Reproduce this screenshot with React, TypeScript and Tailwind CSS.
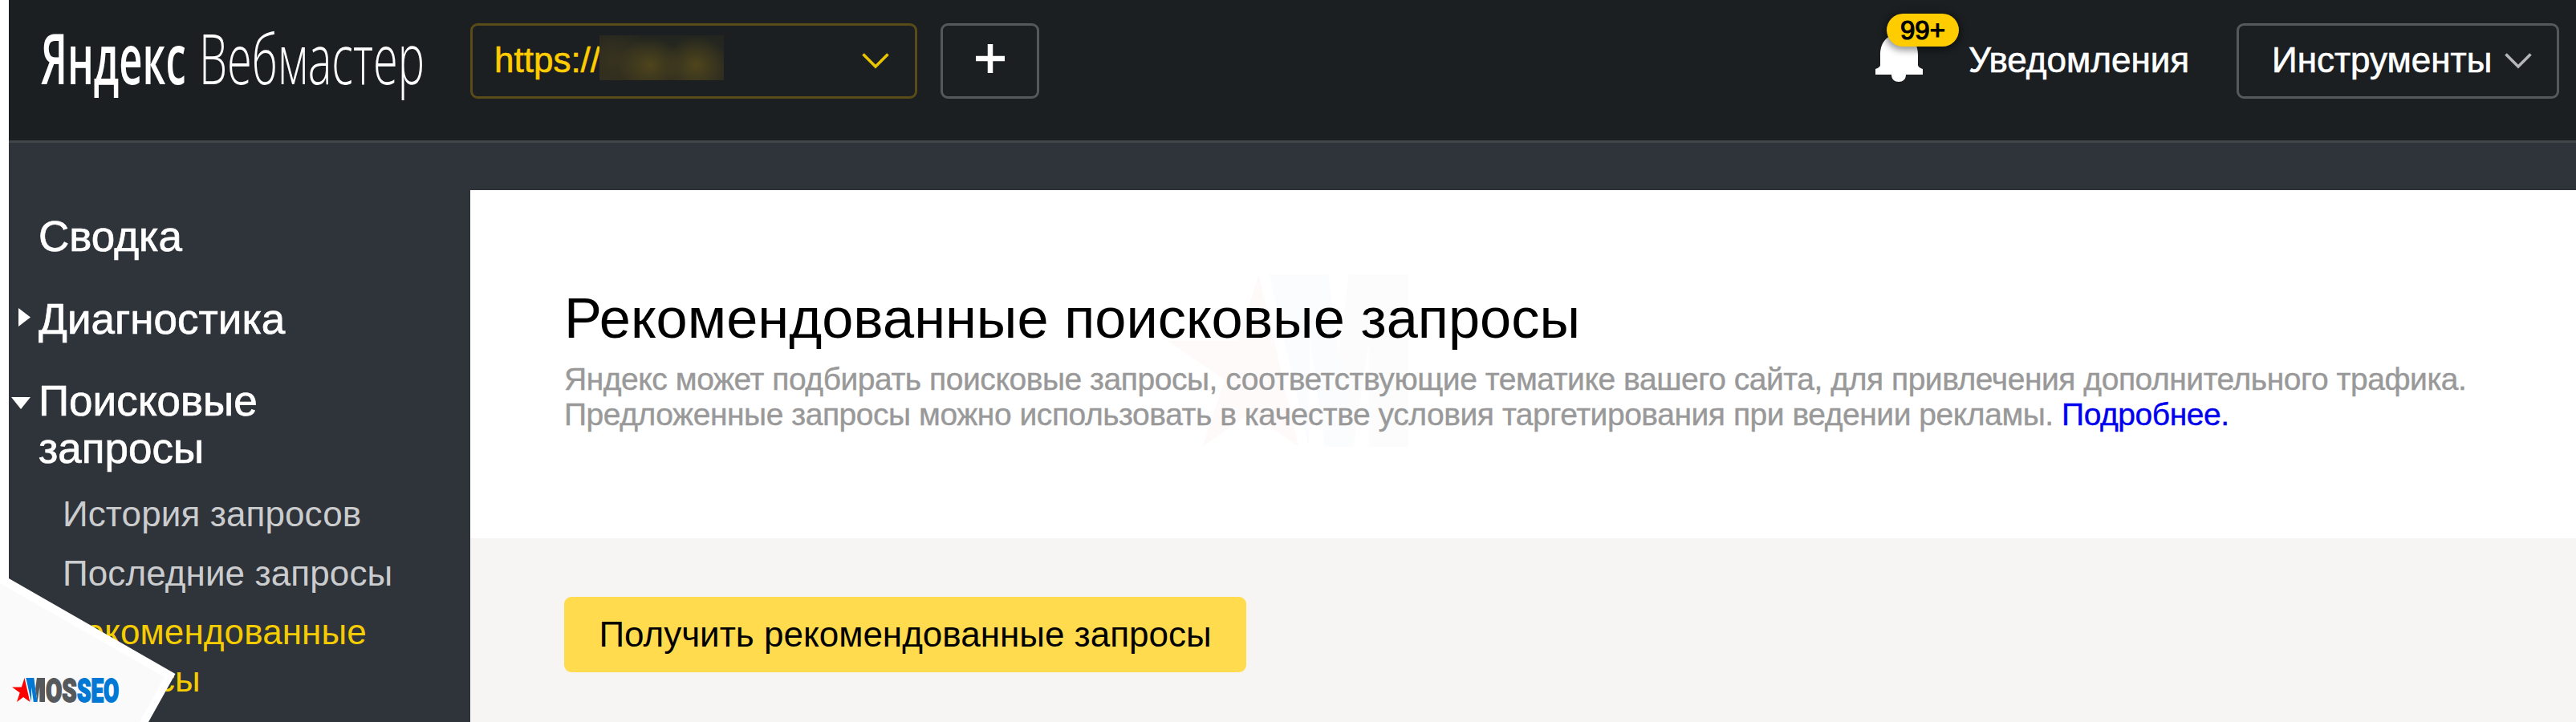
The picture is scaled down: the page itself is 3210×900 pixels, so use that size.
import type { ReactNode } from "react";

interface MarkProps {
  className?: string;
  star: string;
  left: string;
  right: string;
}

function Mark({ className, star, left, right }: MarkProps) {
  return (
    <svg className={className} viewBox="105 126 900 646" preserveAspectRatio="none">
      <path fill={star} d="M446 126 L595 772 L415 645 L235 772 L318 522 L105 375 L366 375 Z" />
      <path fill={left} d="M485 126 L705 126 L745 420 L800 772 L693 772 L637 375 L632 772 Z" />
      <path fill={right} d="M783 126 L1005 126 L1005 772 L858 772 L858 375 L800 772 L745 420 Z" />
    </svg>
  );
}

function Chevron({ className }: { className?: string }) {
  return (
    <svg className={className} width="34" height="20" viewBox="0 0 34 20" fill="none" stroke="currentColor" strokeWidth="3.6">
      <path d="M1.5 1.5 L17 17 L32.5 1.5" />
    </svg>
  );
}

function Logo() {
  return (
    <svg
      className="shrink-0 overflow-visible"
      width="575"
      height="175"
      fill="#fff"
      fontFamily="'Open Sans', sans-serif"
      fontSize="86"
    >
      <text transform="translate(40 105) scale(0.6 1)" textLength="301" lengthAdjust="spacingAndGlyphs" fontWeight="600">
        Яндекс
      </text>
      <text transform="translate(237 105) scale(0.64 1)" textLength="439" lengthAdjust="spacingAndGlyphs" fontWeight="300">
        Вебмастер
      </text>
    </svg>
  );
}

function Bell() {
  return (
    <div className="relative mt-[41px] h-[62px] w-[59px]">
      <svg width="59" height="62" viewBox="0 0 59 62" fill="#fff">
        <path d="M29 2 C13 2 6 13 6 28 V40 Q6 43 0 45 V52 H20 C20 58 24 61 29 61 S38 58 38 52 H59 V45 Q53 43 53 40 V28 C53 13 45 2 29 2 Z" />
      </svg>
      <span className="absolute -top-6 left-[14px] h-[41px] w-[90px] rounded-full bg-[#ffcc00] text-center text-[33px] leading-[41px] text-black shadow-[0_2px_9px_3px_rgba(0,0,0,0.4)] [-webkit-text-stroke:1.2px_#000]">
        99+
      </span>
    </div>
  );
}

function Header() {
  return (
    <header className="flex h-[178px] items-start border-b-3 border-[#424649] bg-[#1b1f22] text-[44px] text-white">
      <Logo />
      <div className="mt-[29px] flex h-[94px] w-[557px] items-center rounded-[9px] border-3 border-[#594c19] pl-[27px] pr-[32px] text-[#ffcc00]">
        <span className="-mt-[2px] w-[131px] leading-[50px] [-webkit-text-stroke:0.6px]">https://</span>
        <span className="-mt-[8px] h-[56px] w-[155px] bg-[radial-gradient(ellipse_40px_34px_at_63px_37px,#4f451c,transparent),radial-gradient(ellipse_40px_36px_at_120px_37px,#4f451c,transparent),radial-gradient(ellipse_48px_44px_at_18px_30px,#38331f,transparent),linear-gradient(#22262400,#2e2c20)] bg-[#22251f]" />
        <Chevron className="ml-auto text-[#e9c400]" />
      </div>
      <div className="ml-[29px] mt-[29px] flex h-[94px] w-[123px] items-center justify-center rounded-[9px] border-3 border-[#56595b]">
        <svg className="-mt-[6px]" width="36" height="36" stroke="#fff" strokeWidth="6.5">
          <path d="M18 0 V36 M0 18 H36" />
        </svg>
      </div>
      <div className="ml-auto mr-[21px] flex items-start">
        <Bell />
        <span className="ml-[57px] mt-[49px] w-[276px] leading-[52px] [-webkit-text-stroke:0.6px]">Уведомления</span>
        <div className="ml-[58px] mt-[29px] flex h-[94px] w-[402px] items-center justify-between rounded-[9px] border-3 border-[#56595b] pl-[41px] pr-[31px]">
          <span className="-mt-[2px] leading-[50px] [-webkit-text-stroke:0.6px]">Инструменты</span>
          <Chevron className="text-[#b4b6b7]" />
        </div>
      </div>
    </header>
  );
}

function MenuItem({ children, arrow }: { children: ReactNode; arrow?: ReactNode }) {
  return (
    <li className="flex text-[53px] leading-[59px] text-white [-webkit-text-stroke:0.7px]">
      <span className="w-[37px] shrink-0">{arrow}</span>
      <span>{children}</span>
    </li>
  );
}

function Sidebar() {
  return (
    <aside className="w-[575px] shrink-0 pt-[87px]">
      <ul className="flex flex-col gap-[43.5px]">
        <MenuItem>Сводка</MenuItem>
        <MenuItem
          arrow={
            <svg className="ml-3 mt-4" width="15" height="23" fill="#fff">
              <path d="M0 0 L15 11.5 L0 23 Z" />
            </svg>
          }
        >
          Диагностика
        </MenuItem>
        <MenuItem
          arrow={
            <svg className="ml-[3px] mt-[25px]" width="24" height="15" fill="#fff">
              <path d="M0 0 H24 L12 15 Z" />
            </svg>
          }
        >
          Поисковые
          <br />
          запросы
        </MenuItem>
      </ul>
      <ul className="mt-[23px] flex flex-col gap-[14.5px] pl-[67px] text-[44px] leading-[59px] tracking-[0.1px] text-[#cbccce]">
        <li>История запросов</li>
        <li>Последние запросы</li>
        <li className="text-[#f5cc00]">
          Рекомендованные
          <br />
          запросы
        </li>
      </ul>
    </aside>
  );
}

function CornerBadge() {
  return (
    <svg className="absolute bottom-0 left-0" width="220" height="182" fontFamily="Roboto, sans-serif" fontSize="41" fontWeight="900">
      <path fill="#fff" d="M0 -4 L11 3 L218.5 122 L185 182 H0 Z" />
      <path fill="#fafafa" d="M0 9 L205 126 L174 182 H0 Z" />
      <svg x="15" y="127" width="41" height="30">
        <Mark star="#ff0000" left="#0078d4" right="#55595c" />
      </svg>
      <text
        transform="translate(57 156.5) scale(0.68 1)"
        textLength="57"
        lengthAdjust="spacingAndGlyphs"
        fill="#55595c"
        stroke="#55595c"
        strokeWidth="1.8"
      >
        OS
      </text>
      <text
        transform="translate(96 156.5) scale(0.66 1)"
        textLength="79"
        lengthAdjust="spacingAndGlyphs"
        fill="#0078d4"
        stroke="#0078d4"
        strokeWidth="1.8"
      >
        SEO
      </text>
    </svg>
  );
}

function Content() {
  return (
    <main className="mt-[59px] flex flex-1 flex-col bg-white">
      <section className="relative h-[434px] pl-[117px] pt-[120px]">
        <Mark
          className="absolute left-[869px] top-[105px] h-[215px] w-[300px]"
          star="#fffafa"
          left="#fafcfe"
          right="#fcfcfc"
        />
        <div className="relative">
          <h1 className="text-[70.4px] leading-[80px] text-black">Рекомендованные поисковые запросы</h1>
          <p className="mt-[13.5px] whitespace-nowrap text-[39px] leading-[44px] tracking-[-0.456px] text-[#999] [-webkit-text-stroke:0.4px]">
            Яндекс может подбирать поисковые запросы, соответствующие тематике вашего сайта, для привлечения дополнительного трафика.
            <br />
            Предложенные запросы можно использовать в качестве условия таргетирования при ведении рекламы.{" "}
            <a className="text-[#0000ee]">Подробнее.</a>
          </p>
        </div>
      </section>
      <section className="flex-1 bg-[#f6f5f3] pl-[117px] pt-[73px]">
        <button className="h-[94px] w-[850px] rounded-[9px] bg-[#ffdb4d] text-[44px] leading-[94px] text-black">
          Получить рекомендованные запросы
        </button>
      </section>
    </main>
  );
}

export default function App() {
  return (
    <div className="relative h-[900px] w-[3210px] overflow-hidden bg-white pl-[11px] font-['Liberation_Sans',Arial,sans-serif]">
      <div className="flex h-full flex-col bg-[#2f333a]">
        <Header />
        <div className="flex flex-1">
          <Sidebar />
          <Content />
        </div>
      </div>
      <CornerBadge />
    </div>
  );
}
